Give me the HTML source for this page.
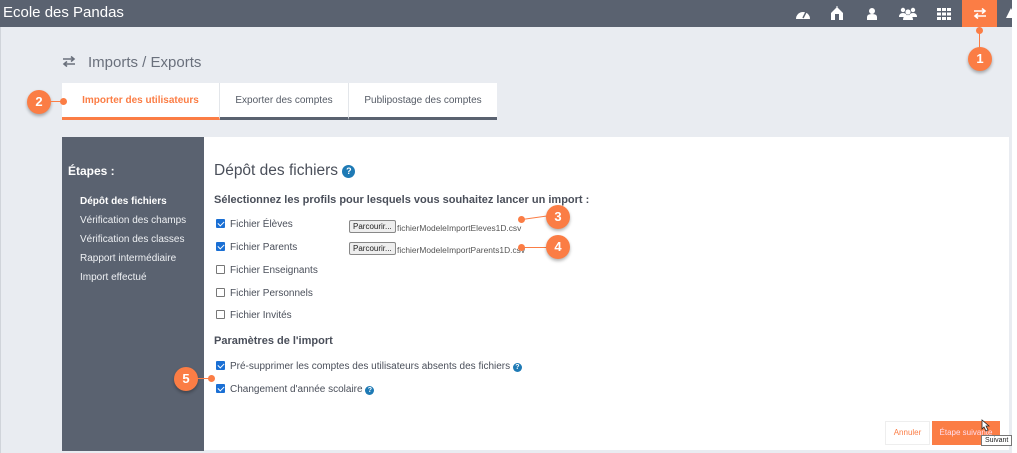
<!DOCTYPE html>
<html><head><meta charset="utf-8"><style>
*{box-sizing:border-box;margin:0;padding:0}
body{width:1017px;height:453px;background:#fff;font-family:"Liberation Sans",sans-serif;position:relative;overflow:hidden;color:#4a4f5a}
.bg{position:absolute;left:0;top:0;width:1012px;height:453px;background:#e9ecf1;border-left:1px solid #d0d4da}
.hdr{position:absolute;left:0;top:0;width:1012px;height:27px;background:#5a6270}
.hdr .t{position:absolute;left:3px;top:4px;color:#fff;font-size:15px}
.ic{position:absolute;top:0;height:27px;width:34px;display:flex;align-items:center;justify-content:center}
.act{background:#fb7d45}
.title{position:absolute;left:62px;top:54px;font-size:15px;color:#6a707c}
.tabs{position:absolute;left:62px;top:83px;height:37px;display:flex;background:#fff}
.tab{height:37px;font-size:10px;color:#555b66;display:flex;align-items:center;justify-content:center;border-bottom:3px solid #5a6270;border-right:1px solid #e3e6ea}
.tab.a{color:#fb7d45;font-weight:bold;border-bottom-color:#fb7d45}
.side{position:absolute;left:62px;top:137px;width:142px;height:314px;background:#5a6270;color:#fff}
.main{position:absolute;left:204px;top:137px;width:805px;height:313px;background:#fff}
.side h3{position:absolute;left:6px;top:27px;font-size:12px}
.side div{position:absolute;left:18px;font-size:10px;color:#eef0f3}
.cb{display:inline-block;width:9px;height:9px;border:1px solid #777;border-radius:1px;vertical-align:-1px;margin-right:5px;background:#fff}
.cb.on{background:#1a6fd4;border-color:#1a6fd4;position:relative}
.cb.on:after{content:"";position:absolute;left:2px;top:0px;width:3px;height:5px;border:solid #fff;border-width:0 1.5px 1.5px 0;transform:rotate(45deg)}
.row{position:absolute;font-size:10px;color:#4a4f5a}
.btn{position:absolute;font-size:8px;border:1px solid #888;background:#eee;border-radius:2px;padding:1px 3px;color:#222}
.fn{position:absolute;font-size:8.4px;color:#555}
.q{display:inline-block;width:9px;height:9px;border-radius:50%;background:#1e7ab5;color:#fff;font-size:7px;font-weight:bold;text-align:center;line-height:9px;vertical-align:0}
.bub{position:absolute;width:24px;height:24px;border-radius:50%;background:#fb7d45;color:#fff;font-weight:bold;font-size:13px;text-align:center;line-height:24px;box-shadow:0 2px 3px rgba(0,0,0,.3)}
.dot{position:absolute;width:7px;height:7px;border-radius:50%;background:#fb7d45}
.ln{position:absolute;background:#fb7d45}
</style></head><body>
<div class="bg"></div>
<div class="hdr"><span class="t">Ecole des Pandas</span>
<div class="ic" style="left:786px"><svg width="16" height="12" viewBox="0 0 16 12"><path d="M1 11A7 7 0 0 1 15 11Z" fill="#fff"/><path d="M8 10L11 4" stroke="#5a6270" stroke-width="1.5"/></svg></div>
<div class="ic" style="left:820px"><svg width="14" height="15" viewBox="0 0 14 15"><path d="M7 1L13 7V14H1V7Z" fill="#fff"/><rect x="5" y="8" width="4" height="6" fill="#5a6270"/><rect x="6.5" y="0" width="1" height="3" fill="#fff"/></svg></div>
<div class="ic" style="left:855px"><svg width="12" height="13" viewBox="0 0 12 13"><circle cx="6" cy="4" r="3" fill="#fff"/><path d="M1 13V10Q1 7 6 7Q11 7 11 10V13Z" fill="#fff"/></svg></div>
<div class="ic" style="left:891px"><svg width="18" height="13" viewBox="0 0 18 13"><circle cx="4" cy="3" r="2.2" fill="#fff"/><circle cx="14" cy="3" r="2.2" fill="#fff"/><circle cx="9" cy="5" r="2.6" fill="#fff"/><path d="M0 10Q0 6 4 6Q8 6 8 10ZM10 10Q10 6 14 6Q18 6 18 10Z" fill="#fff"/><path d="M4 13Q4 8 9 8Q14 8 14 13Z" fill="#fff"/></svg></div>
<div class="ic" style="left:927px"><svg width="14" height="12" viewBox="0 0 14 12"><g fill="#fff"><rect x="0" y="0" width="4" height="3"/><rect x="5" y="0" width="4" height="3"/><rect x="10" y="0" width="4" height="3"/><rect x="0" y="4.5" width="4" height="3"/><rect x="5" y="4.5" width="4" height="3"/><rect x="10" y="4.5" width="4" height="3"/><rect x="0" y="9" width="4" height="3"/><rect x="5" y="9" width="4" height="3"/><rect x="10" y="9" width="4" height="3"/></g></svg></div>
<div class="ic act" style="left:962px;width:35px"><svg width="14" height="11" viewBox="0 0 14 11"><path d="M1 3H12M9 0.5L12 3L9 5.5M13 8H2M5 5.5L2 8L5 10.5" stroke="#fff" stroke-width="1.6" fill="none"/></svg></div>
<div style="position:absolute;left:1006px;top:8px;width:0;height:0;border-left:5px solid transparent;border-right:5px solid transparent;border-bottom:10px solid #fff"></div>
</div>
<div class="ln" style="left:979px;top:30px;width:1px;height:18px"></div>
<div class="dot" style="left:976px;top:27px"></div>
<div class="bub" style="left:968px;top:47px">1</div>
<div class="title"><svg width="14" height="11" viewBox="0 0 14 11" style="vertical-align:0;margin-right:12px"><path d="M1 3H12M9 0.5L12 3L9 5.5M13 8H2M5 5.5L2 8L5 10.5" stroke="#6a707c" stroke-width="1.6" fill="none"/></svg>Imports / Exports</div>
<div class="tabs">
<div class="tab a" style="width:158px">Importer des utilisateurs</div>
<div class="tab" style="width:129px">Exporter des comptes</div>
<div class="tab" style="width:148px;border-right:none">Publipostage des comptes</div>
</div>
<div class="bub" style="left:27px;top:90px">2</div>
<div class="ln" style="left:50px;top:101px;width:14px;height:1px"></div>
<div class="dot" style="left:60px;top:98px"></div>
<div class="side"><h3>Étapes :</h3>
<div style="top:59px;font-weight:bold;color:#fff">Dépôt des fichiers</div>
<div style="top:78px">Vérification des champs</div>
<div style="top:97px">Vérification des classes</div>
<div style="top:116px">Rapport intermédiaire</div>
<div style="top:135px">Import effectué</div>
</div>
<div class="main">
<div style="position:absolute;left:10px;top:25px;font-size:15.5px;color:#4a4f5a">Dépôt des fichiers <span class="q" style="width:13px;height:13px;line-height:13px;font-size:9px;vertical-align:1px">?</span></div>
<div style="position:absolute;left:10px;top:57px;font-size:11px;font-weight:bold;color:#4a4f5a">Sélectionnez les profils pour lesquels vous souhaitez lancer un import :</div>
<div class="row" style="left:12px;top:82px"><span class="cb on"></span>Fichier Élèves</div>
<div class="row" style="left:12px;top:105px"><span class="cb on"></span>Fichier Parents</div>
<div class="row" style="left:12px;top:128px"><span class="cb"></span>Fichier Enseignants</div>
<div class="row" style="left:12px;top:151px"><span class="cb"></span>Fichier Personnels</div>
<div class="row" style="left:12px;top:173px"><span class="cb"></span>Fichier Invités</div>
<div class="btn" style="left:145px;top:83px">Parcourir...</div><div class="fn" style="left:193px;top:86px">fichierModeleImportEleves1D.csv</div>
<div class="btn" style="left:145px;top:105px">Parcourir...</div><div class="fn" style="left:193px;top:108px">fichierModeleImportParents1D.csv</div>
<div style="position:absolute;left:10px;top:198px;font-size:11px;font-weight:bold;color:#4a4f5a">Paramètres de l'import</div>
<div class="row" style="left:12px;top:224px"><span class="cb on"></span>Pré-supprimer les comptes des utilisateurs absents des fichiers <span class="q">?</span></div>
<div class="row" style="left:12px;top:247px"><span class="cb on"></span>Changement d'année scolaire <span class="q">?</span></div>
<div style="position:absolute;left:681px;top:284px;width:45px;height:24px;border:1px solid #eee;color:#fb7d45;font-size:8px;text-align:center;line-height:22px">Annuler</div>
<div style="position:absolute;left:728px;top:284px;width:68px;height:24px;background:#fb7d45;color:#fde;font-size:8px;text-align:center;line-height:24px">Étape suivante</div>
</div>
<div style="position:absolute;left:981px;top:435px;border:1px solid #777;background:#fff;font-size:7px;padding:1px 3px;color:#222">Suivant</div>
<svg style="position:absolute;left:980px;top:419px" width="10" height="14" viewBox="0 0 10 14"><path d="M2 1V10L4 8L6 12L8 11L6 7H9Z" fill="#fff" stroke="#222" stroke-width="0.8"/></svg>
<div class="ln" style="left:522px;top:219px;width:26px;height:1px;transform:rotate(-8deg);transform-origin:left"></div>
<div class="dot" style="left:518px;top:216px"></div>
<div class="bub" style="left:546px;top:205px">3</div>
<div class="ln" style="left:522px;top:247px;width:26px;height:1px"></div>
<div class="dot" style="left:518px;top:244px"></div>
<div class="bub" style="left:546px;top:235px">4</div>
<div class="bub" style="left:174px;top:367px">5</div>
<div class="ln" style="left:197px;top:378px;width:14px;height:1px"></div>
<div class="dot" style="left:208px;top:375px"></div>
</body></html>
